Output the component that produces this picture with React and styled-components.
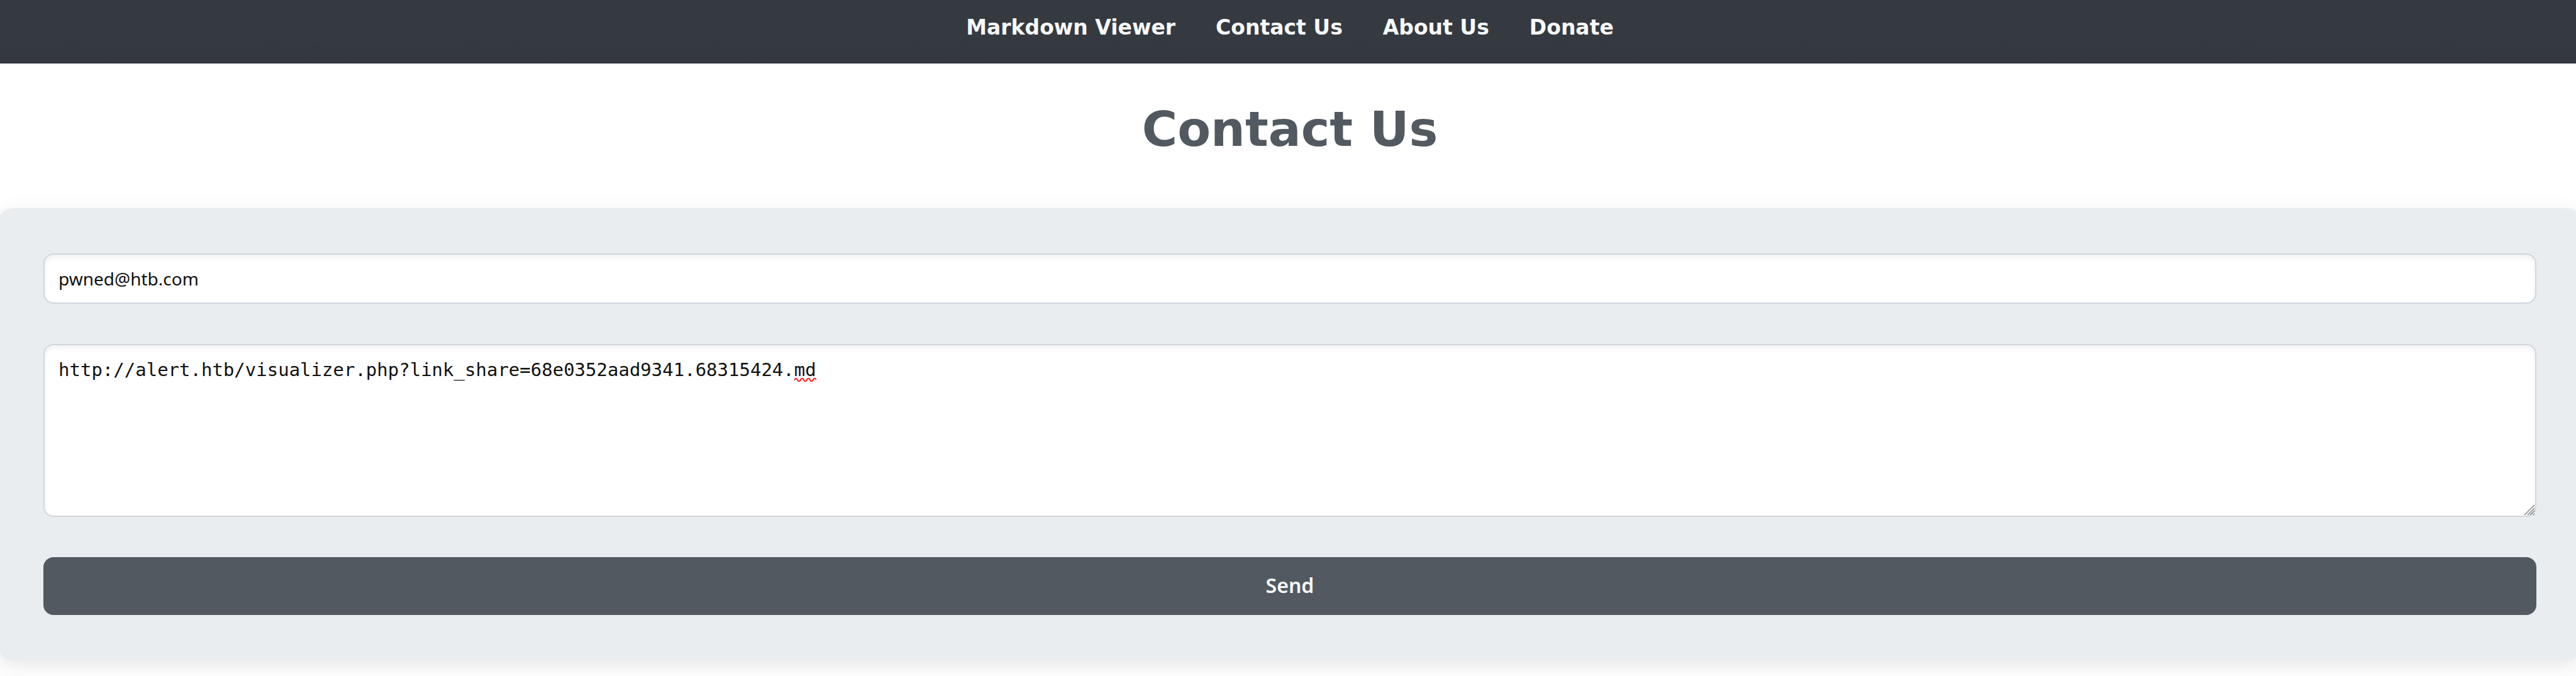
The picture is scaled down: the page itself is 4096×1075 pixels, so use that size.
import React, { useState } from "react";
import styled, { createGlobalStyle, css } from "styled-components";

const GlobalStyle = createGlobalStyle`
  * { box-sizing: border-box; }
  body {
    margin: 0;
    background: #fff;
    font-family: "DejaVu Sans", sans-serif;
  }
`;

const Viewport = styled.div`
  min-height: 100vh;
  overflow: hidden;
`;

const Page = styled.div`
  margin: 0 -9px 0 -3px;
`;

const Header = styled.header`
  padding: 25px 0 38px;
  background: linear-gradient(#353a41 60%, #33373f);
  box-shadow: 0 4px 12px rgba(0, 0, 0, 0.02);
`;

const Nav = styled.nav`
  display: flex;
  justify-content: center;
  gap: 64px;
`;

const NavLink = styled.a`
  color: #f8f9fa;
  font-size: 33px;
  font-weight: 700;
  line-height: 38px;
  text-decoration: none;
`;

const Title = styled.h1`
  margin: 60px 0 80px;
  color: #525960;
  font-size: 77px;
  font-weight: 700;
  line-height: 90px;
  text-align: center;
`;

const Form = styled.form`
  display: flex;
  flex-direction: column;
  gap: 64px;
  padding: 72px;
  border-radius: 24px;
  background: #e9edf0;
  box-shadow: 0 8px 32px rgba(0, 0, 0, 0.1);
`;

const field = css`
  display: block;
  width: 100%;
  border: 2px solid #d1d7dd;
  border-radius: 16px;
  outline: none;
  background: #fff;
  box-shadow: inset 0 3px 8px rgba(0, 0, 0, 0.07);
  color: #111;
`;

const EmailInput = styled.input`
  ${field}
  height: 80px;
  padding: 0 22px;
  font-family: "Noto Sans", sans-serif;
  font-size: 28px;
`;

const MessageBox = styled.div`
  position: relative;
  font-family: "DejaVu Sans Mono", monospace;
  font-size: 29px;
`;

const MessageInput = styled.textarea`
  ${field}
  height: 275px;
  padding: 22px;
  resize: none;
  font-family: inherit;
  font-size: inherit;
  line-height: 34px;
`;

const SpellingMark = styled.svg`
  position: absolute;
  top: 54px;
  left: calc(24px + ${(p) => p.$column}ch);
  width: 2ch;
  height: 6px;
  pointer-events: none;
`;

const Grip = styled.svg`
  position: absolute;
  right: 2px;
  bottom: 2px;
  width: 18px;
  height: 18px;
  pointer-events: none;
`;

const SendButton = styled.button`
  height: 92px;
  padding: 0 0 4px;
  border: 0;
  border-radius: 16px;
  background: #525960;
  color: #f8f9fa;
  font-family: "Noto Sans", sans-serif;
  font-size: 32px;
  font-weight: 600;
`;

const links = ["Markdown Viewer", "Contact Us", "About Us", "Donate"];

export default function App() {
  const [email, setEmail] = useState("pwned@htb.com");
  const [message, setMessage] = useState(
    "http://alert.htb/visualizer.php?link_share=68e0352aad9341.68315424.md"
  );
  const misspelt = message.lastIndexOf("md");

  return (
    <Viewport>
      <GlobalStyle />
      <Page>
        <Header>
          <Nav>
            {links.map((label) => (
              <NavLink key={label} href="#">{label}</NavLink>
            ))}
          </Nav>
        </Header>
        <main>
          <Title>Contact Us</Title>
          <Form onSubmit={(e) => e.preventDefault()}>
            <EmailInput
              type="email"
              aria-label="Email"
              value={email}
              onChange={(e) => setEmail(e.target.value)}
            />
            <MessageBox>
              <MessageInput
                aria-label="Message"
                spellCheck={false}
                value={message}
                onChange={(e) => setMessage(e.target.value)}
              />
              {misspelt >= 0 && (
                <SpellingMark
                  $column={misspelt}
                  viewBox="0 0 35 6"
                  preserveAspectRatio="none"
                  aria-hidden="true"
                >
                  <path
                    d="M0 4 Q2.5 -2 5 3 T10 3 T15 3 T20 3 T25 3 T30 3 T35 3"
                    fill="none"
                    stroke="#ff1a1a"
                    strokeWidth="2"
                  />
                </SpellingMark>
              )}
              <Grip viewBox="0 0 18 18" aria-hidden="true">
                <path
                  d="M1 17 L17 1 M6 17 L17 6 M10 17 L17 10 M15 17 L17 15"
                  fill="none"
                  stroke="#858585"
                  strokeWidth="1.5"
                />
              </Grip>
            </MessageBox>
            <SendButton type="submit">Send</SendButton>
          </Form>
        </main>
      </Page>
    </Viewport>
  );
}
